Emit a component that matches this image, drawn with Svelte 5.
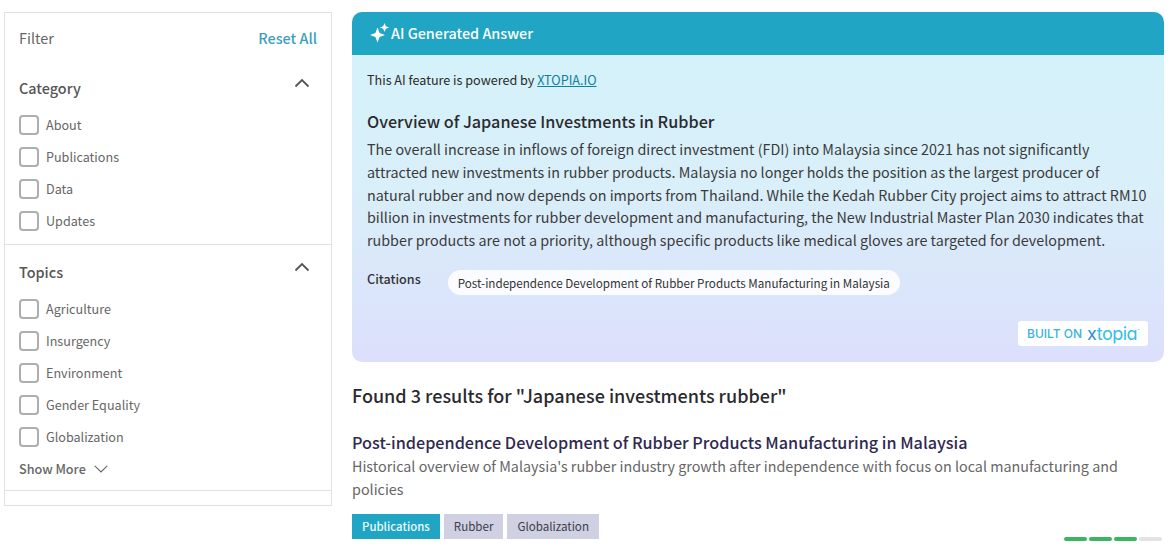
<script>
  const category = ['About', 'Publications', 'Data', 'Updates'];
  const topics = ['Agriculture', 'Insurgency', 'Environment', 'Gender Equality', 'Globalization'];
</script>

<div class="page">
  <aside class="filter">
    <div class="filter-head">
      <span class="filter-title">Filter</span>
      <span class="reset">Reset All</span>
    </div>
    <section class="group first">
      <div class="group-head">
        <h3>Category</h3>
        <svg class="chev" viewBox="0 0 16 10" width="16" height="10"><path d="M1.5 8.5 8 2l6.5 6.5" fill="none" stroke="#555" stroke-width="1.8"/></svg>
      </div>
      {#each category as c}
        <div class="check"><span class="box"></span><span>{c}</span></div>
      {/each}
    </section>
    <section class="group second">
      <div class="group-head">
        <h3>Topics</h3>
        <svg class="chev" viewBox="0 0 16 10" width="16" height="10"><path d="M1.5 8.5 8 2l6.5 6.5" fill="none" stroke="#555" stroke-width="1.8"/></svg>
      </div>
      {#each topics as c}
        <div class="check"><span class="box"></span><span>{c}</span></div>
      {/each}
      <div class="more">
        <span>Show More</span>
        <svg viewBox="0 0 14 8" width="14" height="8"><path d="M.8.8 7 7l6.2-6.2" fill="none" stroke="#666" stroke-width="1.1"/></svg>
      </div>
    </section>
    <div class="tail"></div>
  </aside>

  <main class="main">
    <div class="ai">
      <div class="ai-head">
        <svg viewBox="0 0 20 20" width="20" height="20"><path fill="#fff" d="M7.5 4.5 9.6 10 15 12 9.6 14 7.5 19.5 5.4 14 0 12 5.4 10Z"/><path fill="#fff" d="M14.5 0 15.8 3.2 19.2 4.5 15.8 5.8 14.5 9 13.2 5.8 9.8 4.5 13.2 3.2Z"/></svg>
        <span>AI Generated Answer</span>
      </div>
      <div class="ai-body">
        <p class="powered">This AI feature is powered by <a href="#top">XTOPIA.IO</a></p>
        <h2>Overview of Japanese Investments in Rubber</h2>
        <p class="answer">The overall increase in inflows of foreign direct investment (FDI) into Malaysia since 2021 has not significantly<br>attracted new investments in rubber products. Malaysia no longer holds the position as the largest producer of<br>natural rubber and now depends on imports from Thailand. While the Kedah Rubber City project aims to attract RM10<br>billion in investments for rubber development and manufacturing, the New Industrial Master Plan 2030 indicates that<br>rubber products are not a priority, although specific products like medical gloves are targeted for development.</p>
        <div class="cites">
          <span class="cites-label">Citations</span>
          <span class="pill">Post-independence Development of Rubber Products Manufacturing in Malaysia</span>
        </div>
        <div class="built-row">
          <span class="built"><span class="on">BUILT ON</span><span class="logo"><span class="x">x</span>topia<sup>™</sup></span></span>
        </div>
      </div>
    </div>

    <h1>Found 3 results for "Japanese investments rubber"</h1>
    <h4>Post-independence Development of Rubber Products Manufacturing in Malaysia</h4>
    <p class="desc">Historical overview of Malaysia's rubber industry growth after independence with focus on local manufacturing and<br>policies</p>
    <div class="tags">
      <span class="tag primary">Publications</span>
      <span class="tag">Rubber</span>
      <span class="tag">Globalization</span>
    </div>
  </main>

  <div class="progress"><i class="g"></i><i class="g"></i><i class="g"></i><i></i></div>
</div>

<style>
  :global(body) {
    margin: 0;
    background: #fff;
  }
  .page {
    position: relative;
    width: 1174px;
    height: 551px;
    overflow: hidden;
    display: flex;
    align-items: flex-start;
    gap: 20px;
    padding: 12px 10px 0 4px;
    box-sizing: border-box;
    font-family: "Noto Sans CJK JP", "Noto Sans", sans-serif;
    color: #333;
  }
  .filter {
    width: 328px;
    height: 494px;
    flex: none;
    box-sizing: border-box;
    border: 1px solid #e1e1e4;
    display: flex;
    flex-direction: column;
  }
  .filter-head {
    display: flex;
    justify-content: space-between;
    align-items: center;
    height: 24px;
    padding: 13px 14px 0 14px;
    font-size: 14.4px;
    line-height: 24px;
  }
  .filter-title { color: #666; }
  .reset { color: #3d9fba; font-weight: 500; }
  .group { border-bottom: 1px solid #e1e1e4; padding: 0 14px; box-sizing: border-box; }
  .first { height: 195px; padding-top: 26px; }
  .second { height: 246px; padding-top: 15px; }
  .group-head {
    display: flex;
    justify-content: space-between;
    height: 24px;
    margin-bottom: 9px;
  }
  h3 {
    margin: 0;
    font-size: 14.4px;
    line-height: 24px;
    font-weight: 500;
    color: #555;
  }
  .chev { margin: 2px 7px 0 0; }
  .check {
    display: flex;
    align-items: center;
    gap: 7px;
    height: 32px;
    font-size: 12.6px;
    line-height: 20px;
    color: #666;
  }
  .box {
    width: 20px;
    height: 20px;
    box-sizing: border-box;
    border: 2px solid #aeaeae;
    border-radius: 4px;
    background: #fff;
  }
  .more {
    display: flex;
    align-items: center;
    gap: 8px;
    font-size: 12.6px;
    line-height: 20px;
    font-weight: 500;
    color: #666;
    margin-top: 6px;
  }
  .tail { flex: 1; }
  .main { width: 812px; flex: none; }
  .ai {
    height: 350px;
    border-radius: 10px;
    overflow: hidden;
    background: linear-gradient(180deg, #d3f2f9 0%, #d9eff9 50%, #dcdffc 100%);
    display: flex;
    flex-direction: column;
  }
  .ai-head {
    height: 41px;
    padding-bottom: 2px;
    flex: none;
    background: #20a5c4;
    display: flex;
    align-items: center;
    gap: 1px;
    padding-left: 18px;
    color: #fff;
    font-size: 14.4px;
    font-weight: 500;
  }
  .ai-body {
    flex: 1;
    padding: 15px 16px 0 15px;
    display: flex;
    flex-direction: column;
  }
  .powered {
    margin: 0;
    font-size: 12.6px;
    line-height: 20px;
    color: #2a2a2a;
  }
  .powered a { color: #0f7ea0; }
  h2 {
    margin: 18px 0 0;
    font-size: 16.2px;
    line-height: 26px;
    font-weight: 500;
    color: #2a2a2e;
  }
  .answer {
    margin: 4px 0 0;
    font-size: 14.34px;
    line-height: 22.75px;
    color: #3a3a3a;
    white-space: nowrap;
  }
  .cites {
    display: flex;
    align-items: flex-start;
    gap: 27px;
    margin-top: 17px;
  }
  .cites-label {
    font-size: 12.6px;
    line-height: 20px;
    font-weight: 500;
    color: #333;
  }
  .pill {
    background: #fbfcff;
    border-radius: 13px;
    height: 25px;
    margin-top: 1px;
    padding: 0 10px;
    font-size: 11.65px;
    line-height: 25px;
    color: #333;
    white-space: nowrap;
  }
  .built-row {
    display: flex;
    justify-content: flex-end;
    margin-top: 26px;
  }
  .built {
    display: flex;
    align-items: center;
    gap: 5px;
    height: 25px;
    width: 130px;
    box-sizing: border-box;
    padding: 0 0 0 9px;
    background: #fff;
    border-radius: 3px;
    color: #35b4e0;
    white-space: nowrap;
  }
  .on { font-family: "Inter", sans-serif; font-size: 12px; font-weight: 500; letter-spacing: 0; color: #3ab3da; }
  .logo {
    font-family: "Inter", sans-serif;
    font-size: 18px;
    font-weight: 400;
    letter-spacing: -.5px;
    line-height: 25px;
    font-feature-settings: "cv11";
    color: #34bde6;
  }
  .x { color: #2a8fd0; }
  .logo sup { font-size: 4px; vertical-align: 8px; line-height: 0; }
  h1 {
    margin: 20px 0 0;
    font-size: 18px;
    line-height: 26px;
    font-weight: 500;
    color: #2a2a2e;
  }
  h4 {
    margin: 21px 0 0;
    font-size: 16.2px;
    line-height: 26px;
    font-weight: 500;
    color: #2f2a50;
  }
  .desc {
    margin: -1px 0 0;
    font-size: 14.34px;
    line-height: 23px;
    color: #666;
    white-space: nowrap;
  }
  .tags {
    display: flex;
    gap: 4px;
    margin-top: 14px;
  }
  .tag {
    height: 25px;
    padding: 0 10px;
    background: #cfd0e2;
    font-size: 11.6px;
    line-height: 25px;
    color: #3c3c4a;
  }
  .tag.primary {
    background: #20a5c4;
    color: #e8fbff;
    font-size: 11.4px;
    font-weight: 500;
  }
  .progress {
    position: absolute;
    left: 1064px;
    top: 537px;
    display: flex;
    gap: 2px;
  }
  .progress i {
    display: block;
    width: 23px;
    height: 4px;
    border-radius: 2px;
    background: #e3e3e3;
  }
  .progress i.g { background: #3cb563; }
</style>
